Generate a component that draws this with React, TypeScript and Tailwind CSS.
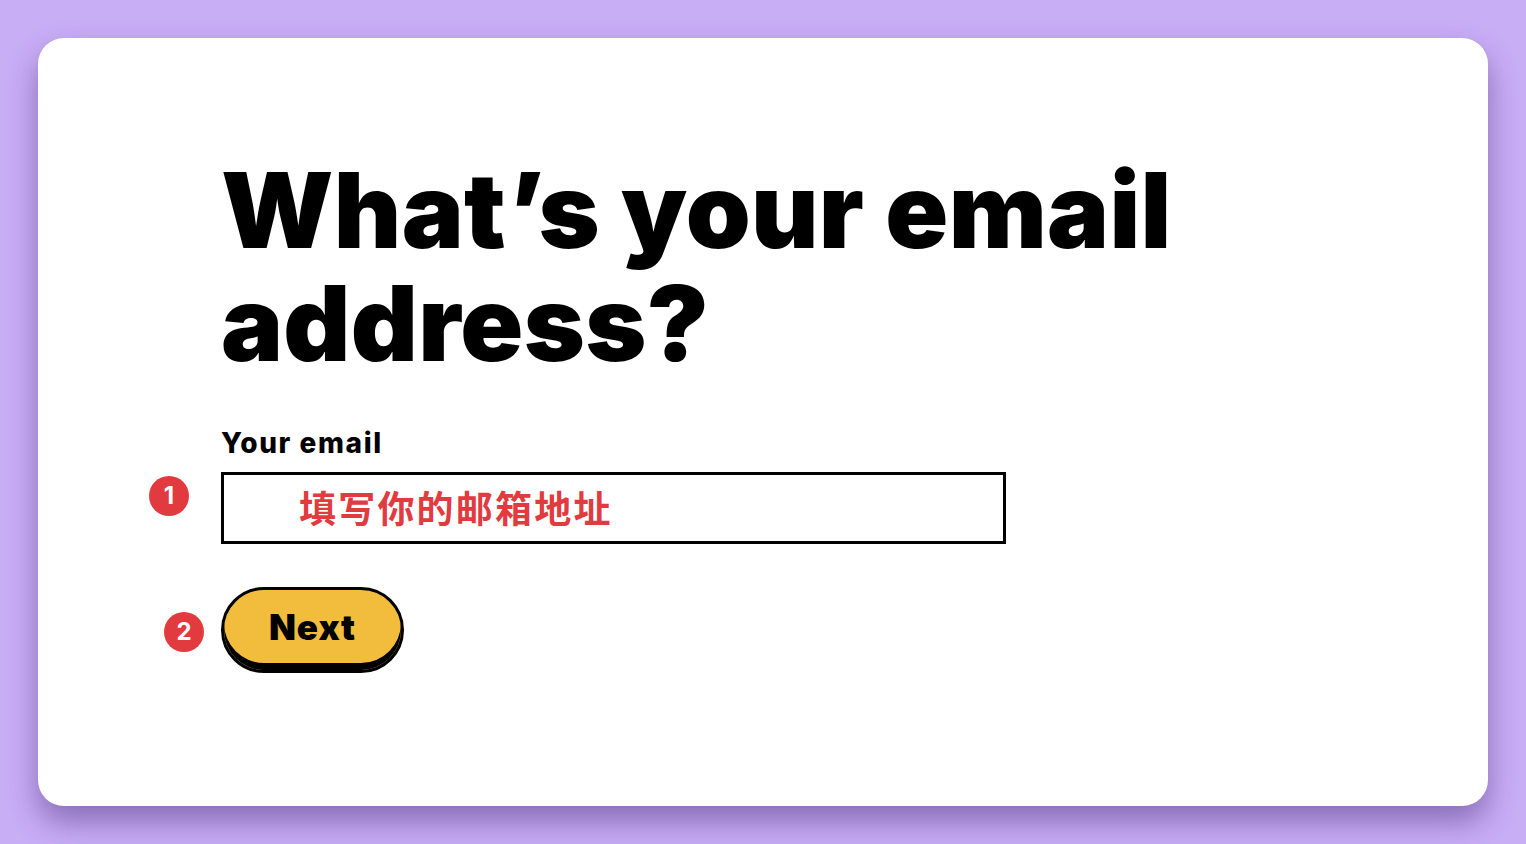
import React from "react";

function Badge({ n }: { n: number }) {
  return (
    <div className="flex h-[40px] w-[40px] items-center justify-center rounded-full bg-[#e23b3f] text-[24px] font-bold text-white [font-family:Inter,'Liberation_Sans',sans-serif]">
      {n}
    </div>
  );
}

export default function App() {
  return (
    <div className="min-h-[844px] w-full bg-[#c8aef5] p-[38px] [font-family:Inter,'Liberation_Sans',sans-serif]">
      <div className="h-[768px] w-full rounded-[26px] bg-white shadow-[0_16px_30px_rgba(60,30,110,0.45)]">
        <div className="pl-[183px] pt-[116px]">
          <h1 className="w-[1000px] text-[104px] font-black leading-[113px] tracking-[0.3px] text-black">
            What’s your email address?
          </h1>
          <div className="mt-[47px] text-[28px] font-extrabold leading-[32px] tracking-[1.6px] text-black">Your email</div>
          <div className="relative mt-[13px]">
            <div className="absolute left-[-72px] top-[4px]">
              <Badge n={1} />
            </div>
            <div className="flex h-[72px] w-[785px] items-center border-[3px] border-black pl-[75px]">
              <span className="text-[37px] font-bold tracking-[2.2px] text-[#e23b3f] [font-family:'Noto_Sans_CJK_SC',sans-serif]">
                填写你的邮箱地址
              </span>
            </div>
          </div>
          <div className="relative mt-[43px]">
            <div className="absolute left-[-57px] top-[25px]">
              <Badge n={2} />
            </div>
            <button className="h-[86px] w-[183px] rounded-full border-[3px] border-black bg-[#f2bd3d] pb-[6px] text-[35px] font-black tracking-[1px] text-black shadow-[inset_0_-7px_0_#000]">
              Next
            </button>
          </div>
        </div>
      </div>
    </div>
  );
}
